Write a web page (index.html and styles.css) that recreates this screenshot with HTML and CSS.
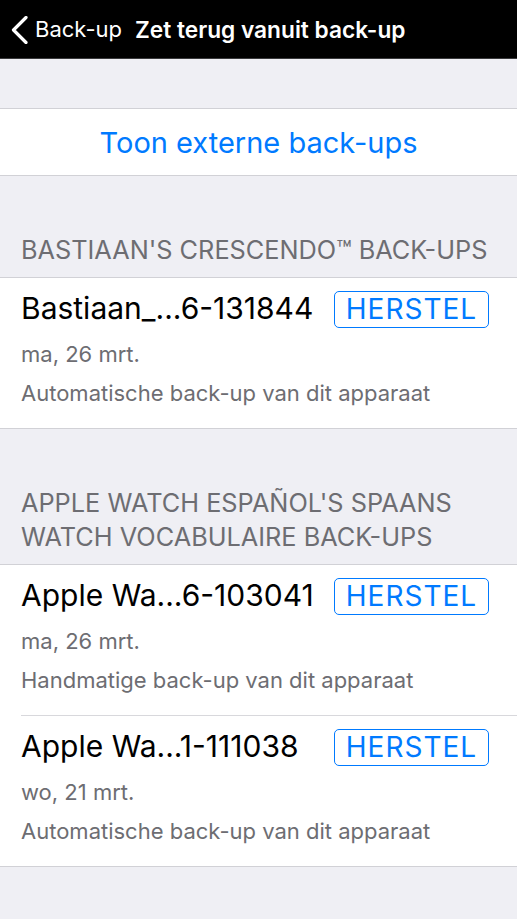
FILE: index.html
```html
<!DOCTYPE html>
<html lang="nl">
<head>
<meta charset="utf-8">
<title>Zet terug vanuit back-up</title>
<link rel="stylesheet" href="styles.css">
</head>
<body>
<div class="screen">
  <header class="nav">
    <a class="back">
      <svg class="chev" width="20" height="28" viewBox="0 0 20 28"><path d="M16 1.5 L3.5 14 L16 26.5" fill="none" stroke="#fff" stroke-width="3.2" stroke-linecap="round" stroke-linejoin="round"/></svg>
      <span class="back-label">Back-up</span>
    </a>
    <span class="nav-title">Zet terug vanuit back-up</span>
  </header>

  <div class="spacer-top"></div>

  <section class="group">
    <div class="cell-link">Toon externe back-ups</div>
  </section>

  <div class="section-header">BASTIAAN'S CRESCENDO™ BACK-UPS</div>
  <section class="group">
    <div class="backup">
      <div class="row">
        <span class="name">Bastiaan_...6-131844</span>
        <span class="btn">HERSTEL</span>
      </div>
      <div class="date">ma, 26 mrt.</div>
      <div class="desc">Automatische back-up van dit apparaat</div>
    </div>
  </section>

  <div class="section-header">APPLE WATCH ESPAÑOL'S SPAANS<br>WATCH VOCABULAIRE BACK-UPS</div>
  <section class="group">
    <div class="backup">
      <div class="row">
        <span class="name">Apple Wa...6-103041</span>
        <span class="btn">HERSTEL</span>
      </div>
      <div class="date">ma, 26 mrt.</div>
      <div class="desc">Handmatige back-up van dit apparaat</div>
    </div>
    <div class="backup">
      <div class="row">
        <span class="name">Apple Wa...1-111038</span>
        <span class="btn">HERSTEL</span>
      </div>
      <div class="date">wo, 21 mrt.</div>
      <div class="desc">Automatische back-up van dit apparaat</div>
    </div>
  </section>
</div>
</body>
</html>
```
FILE: styles.css
```css
html, body {
  margin: 0;
  padding: 0;
  background: #efeff4;
  font-family: Inter, "Liberation Sans", Arial, sans-serif;
}

.screen {
  width: 517px;
  min-height: 919px;
  background: #efeff4;
}

.nav {
  height: 59px;
  background: #000;
  display: flex;
  align-items: center;
  box-sizing: border-box;
  border-bottom: 1px solid #3a3a3c;
  color: #fff;
}

.back {
  display: flex;
  align-items: center;
  padding-left: 10px;
}

.chev {
  display: block;
  margin-top: 1px;
}

.back-label {
  font-size: 22px;
  margin-left: 5px;
}

.nav-title {
  font-size: 22.7px;
  font-weight: 600;
  margin-left: 13px;
}

.spacer-top {
  height: 49px;
}

.group {
  background: #fff;
  border-top: 1px solid #d1d1d6;
  border-bottom: 1px solid #d1d1d6;
}

.cell-link {
  height: 66px;
  display: flex;
  align-items: center;
  justify-content: center;
  color: #007aff;
  font-size: 29px;
}

.section-header {
  padding: 57px 21px 10px 21px;
  font-size: 25.3px;
  line-height: 34px;
  color: #6d6d72;
}

.backup {
  margin-left: 21px;
  padding: 12px 28px 23px 0;
  height: 115px;
  border-bottom: 1px solid #d8d8dc;
}

.backup:last-child {
  border-bottom: none;
}

.row {
  display: flex;
  align-items: baseline;
  height: 37px;
}

.name {
  flex: 1;
  font-size: 30px;
  color: #000;
}

.btn {
  box-sizing: border-box;
  width: 155px;
  height: 37px;
  border: 1.5px solid #007aff;
  border-radius: 5px;
  color: #007aff;
  font-size: 28px;
  letter-spacing: 1px;
  line-height: 34px;
  text-align: center;
}

.date {
  margin-top: 14px;
  font-size: 22px;
  line-height: 26px;
  color: #6d6d72;
}

.desc {
  margin-top: 13px;
  font-size: 22px;
  line-height: 26px;
  color: #6d6d72;
}
```
